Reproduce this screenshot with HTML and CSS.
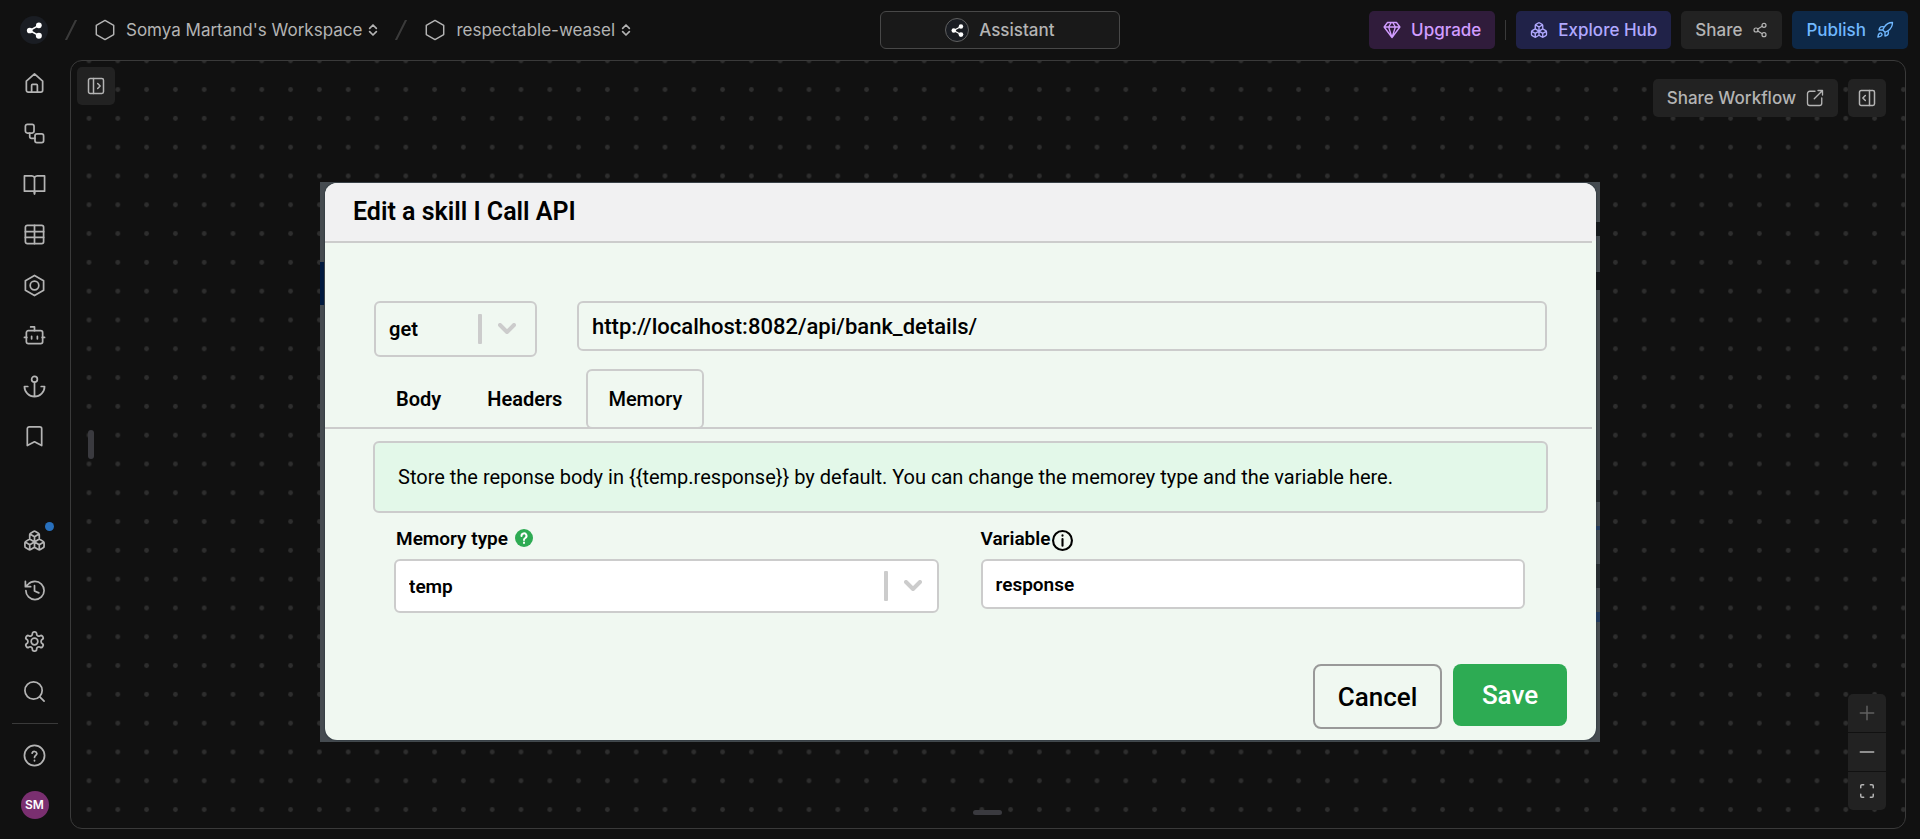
FILE: index.html
```html
<!DOCTYPE html>
<html lang="en">
<head>
  <meta charset="UTF-8">
  <meta name="viewport" content="width=device-width, initial-scale=1.0">
  <title>respectable-weasel</title>
  <link rel="stylesheet" href="styles.css">
</head>
<body>
  <svg class="defs" aria-hidden="true">
    <symbol id="i-hexagon" viewBox="0 0 24 24"><path d="M12 1.500 21.500 7v10L12 22.500 2.500 17V7z"/></symbol>
    <symbol id="i-updown" viewBox="0 0 12 14"><path d="m2 5 4-4 4 4M2 9l4 4 4-4"/></symbol>
    <symbol id="i-share" viewBox="0 0 24 24"><circle cx="18" cy="5" r="3"/><circle cx="6" cy="12" r="3"/><circle cx="18" cy="19" r="3"/><path d="m8.600 13.500 6.800 4M15.400 6.500l-6.800 4"/></symbol>
    <symbol id="i-logo" viewBox="0 0 24 24"><path d="M17.500 5.500 6 12l11.500 6.500"/><circle class="dot" cx="17.500" cy="5.500" r="3.600"/><circle class="dot" cx="6" cy="12" r="3.600"/><circle class="dot" cx="17.500" cy="18.500" r="3.800"/></symbol>
    <symbol id="i-boxes" viewBox="0 0 24 24"><path d="M2.970 12.920A2 2 0 0 0 2 14.630v3.240a2 2 0 0 0 .970 1.710l3 1.800a2 2 0 0 0 2.060 0L12 19v-5.500l-5-3-4.030 2.420ZM7 16.500l-4.740-2.850M7 16.500l5-3M7 16.500v5.170M12 13.500V19l3.970 2.380a2 2 0 0 0 2.060 0l3-1.800a2 2 0 0 0 .970-1.710v-3.240a2 2 0 0 0-.970-1.710L17 10.500l-5 3ZM17 16.500l-5-3M17 16.500l4.740-2.850M17 16.500v5.170M7.970 4.420A2 2 0 0 0 7 6.130v4.370l5 3 5-3V6.130a2 2 0 0 0-.970-1.710l-3-1.800a2 2 0 0 0-2.060 0l-3 1.800ZM12 8 7.260 5.150M12 8l4.740-2.850M12 13.500V8"/></symbol>
    <symbol id="i-chevron" viewBox="0 0 18 12"><path d="m2 2 7 7 7-7"/></symbol>
  </svg>

  <header class="topbar">
    <nav class="crumbs">
      <a class="logo" href="#" aria-label="Home"><svg><use href="#i-logo"/></svg></a>
      <svg class="slash" viewBox="0 0 12 20"><path d="M11 0 1 20"/></svg>
      <button class="crumb"><svg class="hex"><use href="#i-hexagon"/></svg>Somya Martand's Workspace<svg class="updown"><use href="#i-updown"/></svg></button>
      <svg class="slash" viewBox="0 0 12 20"><path d="M11 0 1 20"/></svg>
      <button class="crumb"><svg class="hex"><use href="#i-hexagon"/></svg>respectable-weasel<svg class="updown"><use href="#i-updown"/></svg></button>
    </nav>
    <button class="assistant"><span class="badge"><svg><use href="#i-logo"/></svg></span>Assistant</button>
    <div class="actions">
      <button class="btn purple"><svg viewBox="0 0 24 24"><path d="M6 2h12l4.500 6L12 22 1.500 8ZM11 2 7.500 8 12 22l4.500-14L13 2M1.500 8h21"/></svg>Upgrade</button>
      <span class="divider"></span>
      <button class="btn iris"><svg><use href="#i-boxes"/></svg>Explore Hub</button>
      <button class="btn">Share<svg class="small"><use href="#i-share"/></svg></button>
      <button class="btn blue">Publish<svg viewBox="0 0 24 24"><path d="M4.500 16.500c-1.500 1.260-2 5-2 5s3.740-.5 5-2c.71-.84.7-2.130-.09-2.910a2.180 2.180 0 0 0-2.910-.09zM12 15l-3-3a22 22 0 0 1 2-3.950A12.880 12.880 0 0 1 22 2c0 2.720-.78 7.500-6 11a22.350 22.350 0 0 1-4 2zM9 12H4s.55-3.030 2-4c1.620-1.080 5 0 5 0M12 15v5s3.030-.55 4-2c1.080-1.620 0-5 0-5"/></svg></button>
    </div>
  </header>

  <div class="main">
    <aside class="sidebar">
      <nav class="side-group side-top">
        <a href="#" aria-label="Home"><svg viewBox="0 0 24 24"><path d="M3.500 9.500 12 2l8.500 7.500V19a2 2 0 0 1-2 2h-13a2 2 0 0 1-2-2zM9 21v-7a1 1 0 0 1 1-1h4a1 1 0 0 1 1 1v7"/></svg></a>
        <a href="#" aria-label="Workflow"><svg viewBox="0 0 24 24"><rect x="2.500" y="2.500" width="9" height="9" rx="2"/><path d="M7 11.500V15a2 2 0 0 0 2 2h3.500"/><rect x="12.500" y="12.500" width="9" height="9" rx="2"/></svg></a>
        <a href="#" aria-label="Knowledge"><svg viewBox="0 0 24 24"><path d="M1.500 3H9a3 3 0 0 1 3 2 3 3 0 0 1 3-2h7.500v16H14a2 2 0 0 0-2 3 2 2 0 0 0-2-3H1.500zM12 5v16"/></svg></a>
        <a href="#" aria-label="Tables"><svg viewBox="0 0 24 24"><rect x="2.500" y="2.500" width="19" height="19" rx="2"/><path d="M2.500 9h19M2.500 15h19M12 2.500v19"/></svg></a>
        <a href="#" aria-label="Variables"><svg viewBox="0 0 24 24"><path d="M12 1.500 21.500 7v10L12 22.500 2.500 17V7z"/><circle cx="12" cy="12" r="4.500"/></svg></a>
        <a href="#" aria-label="Agents"><svg viewBox="0 0 24 24"><path d="M12 7V3H8M1.500 14H4M20 14h2.500M15 13v2.500M9 13v2.500"/><rect x="3.500" y="7" width="17" height="13.500" rx="2"/></svg></a>
        <a href="#" aria-label="Hooks"><svg viewBox="0 0 24 24"><circle cx="12" cy="4.500" r="3"/><path d="M12 22.500v-15M5 12H1.500a10.500 10.500 0 0 0 21 0H19"/></svg></a>
        <a href="#" aria-label="Saved"><svg viewBox="0 0 24 24"><path d="m19.500 21.500-7.500-4-7.500 4V4a2 2 0 0 1 2-2h11a2 2 0 0 1 2 2z"/></svg></a>
      </nav>
      <div class="side-bottom">
        <nav class="side-group side-tools">
          <a href="#" class="has-dot" aria-label="Hub"><svg><use href="#i-boxes"/></svg></a>
          <a href="#" aria-label="History"><svg viewBox="0 0 24 24"><path d="M3 12a9.500 9.500 0 1 0 9.500-9.500 10 10 0 0 0-7.200 3L2.500 8M2.500 2.500V8H8M12 7v5.500l4.500 2"/></svg></a>
          <a href="#" aria-label="Settings"><svg viewBox="0 0 24 24"><path d="M12.220 2h-.44a2 2 0 0 0-2 2v.18a2 2 0 0 1-1 1.730l-.43.25a2 2 0 0 1-2 0l-.15-.08a2 2 0 0 0-2.730.73l-.22.38a2 2 0 0 0 .73 2.730l.15.1a2 2 0 0 1 1 1.720v.51a2 2 0 0 1-1 1.740l-.15.09a2 2 0 0 0-.73 2.730l.22.38a2 2 0 0 0 2.730.73l.15-.08a2 2 0 0 1 2 0l.43.25a2 2 0 0 1 1 1.730V20a2 2 0 0 0 2 2h.44a2 2 0 0 0 2-2v-.18a2 2 0 0 1 1-1.730l.43-.25a2 2 0 0 1 2 0l.15.08a2 2 0 0 0 2.730-.73l.22-.39a2 2 0 0 0-.73-2.730l-.15-.08a2 2 0 0 1-1-1.740v-.5a2 2 0 0 1 1-1.740l.15-.09a2 2 0 0 0 .73-2.730l-.22-.38a2 2 0 0 0-2.730-.73l-.15.08a2 2 0 0 1-2 0l-.43-.25a2 2 0 0 1-1-1.730V4a2 2 0 0 0-2-2z"/><circle cx="12" cy="12" r="3.500"/></svg></a>
          <a href="#" aria-label="Search"><svg viewBox="0 0 24 24"><circle cx="11" cy="11" r="9"/><path d="m22 22-4.500-4.500"/></svg></a>
        </nav>
        <hr>
        <nav class="side-group side-user">
          <a href="#" aria-label="Help"><svg viewBox="0 0 24 24"><circle cx="12" cy="12" r="10.500"/><path d="M9.500 9.500a2.600 2.600 0 0 1 5 .5c0 1.800-2.500 2-2.500 4M12 17v.500"/></svg></a>
          <a href="#" class="avatar">SM</a>
        </nav>
      </div>
    </aside>

    <main class="canvas">
      <svg class="dots" width="100%" height="100%" aria-hidden="true">
        <defs>
          <pattern id="grid" width="24" height="24" patternUnits="userSpaceOnUse" patternTransform="translate(3.600 14.200) scale(1.200)"><circle cx="12" cy="12" r="2"/></pattern>
        </defs>
        <rect width="100%" height="100%" fill="url(#grid)"/>
      </svg>

      <button class="icon-btn panel-toggle" aria-label="Open panel"><svg viewBox="0 0 24 24"><rect x="3" y="3" width="18" height="18" rx="2"/><path d="M9 3v18m5-12 3 3-3 3"/></svg></button>
      <div class="canvas-tools">
        <button class="btn">Share Workflow<svg viewBox="0 0 24 24"><path d="M12 3H5a3 3 0 0 0-3 3v13a3 3 0 0 0 3 3h13a3 3 0 0 0 3-3v-7M16 2h6v6M22 2 11 13"/></svg></button>
        <button class="icon-btn" aria-label="Open details"><svg viewBox="0 0 24 24"><rect x="3" y="3" width="18" height="18" rx="2"/><path d="M15 3v18m-5-12-3 3 3 3"/></svg></button>
      </div>
      <span class="handle handle-left"></span>
      <span class="handle handle-bottom"></span>
      <div class="zoom">
        <button class="icon-btn" aria-label="Zoom in" disabled><svg viewBox="0 0 24 24"><path d="M12 4v16M4 12h16"/></svg></button>
        <button class="icon-btn" aria-label="Zoom out"><svg viewBox="0 0 24 24"><path d="M4 12h16"/></svg></button>
        <button class="icon-btn" aria-label="Fit view"><svg viewBox="0 0 24 24"><path d="M8 4.500H6A1.500 1.500 0 0 0 4.500 6v2M16 4.500h2A1.500 1.500 0 0 1 19.500 6v2M4.500 16v2A1.500 1.500 0 0 0 6 19.500h2M19.500 16v2a1.500 1.500 0 0 1-1.500 1.500h-2"/></svg></button>
      </div>

      <div class="frame">
        <form class="dialog">
          <h1>Edit a skill I Call API</h1>
          <hr>
          <div class="request">
            <div class="select method">
              <select aria-label="Method"><option>get</option><option>post</option></select>
              <span class="arrow"><svg><use href="#i-chevron"/></svg></span>
            </div>
            <input type="text" class="url" aria-label="URL" value="http://localhost:8082/api/bank_details/">
          </div>
          <div class="tabs">
            <button type="button">Body</button>
            <button type="button">Headers</button>
            <button type="button" class="active">Memory</button>
          </div>
          <hr>
          <p class="note">Store the reponse body in {{temp.response}} by default. You can change the memorey type and the variable here.</p>
          <div class="fields">
            <div class="field">
              <div class="label"><label for="memory">Memory type</label><svg class="help" viewBox="0 0 18 18"><circle cx="9" cy="9" r="9"/><path d="M6.500 7a2.500 2.500 0 1 1 3.800 2c-1 .6-1.300 1-1.300 2M9 13.500v.5"/></svg></div>
              <div class="select memory">
                <select id="memory"><option>temp</option><option>session</option></select>
                <span class="arrow"><svg><use href="#i-chevron"/></svg></span>
              </div>
            </div>
            <div class="field">
              <div class="label variable"><label for="variable">Variable</label><svg class="info" viewBox="0 0 20 20"><circle cx="10" cy="10" r="9"/><path d="M10 8.500V15M10 5v.500"/></svg></div>
              <input type="text" id="variable" value="response">
            </div>
          </div>
          <div class="buttons">
            <button type="button" class="cancel">Cancel</button>
            <button type="submit" class="save">Save</button>
          </div>
        </form>
      </div>
    </main>
  </div>
</body>
</html>
```
FILE: styles.css
```css
* {
  box-sizing: border-box;
}
body {
  margin: 0;
  min-height: 100vh;
  display: flex;
  flex-direction: column;
  background: #111;
  color: #b4b4b4;
  font-family: Inter, sans-serif;
  font-size: 17px;
}
button, input, select {
  font: inherit;
  color: inherit;
  margin: 0;
}
button {
  cursor: pointer;
  background: none;
  border: none;
  padding: 0;
}
a {
  color: inherit;
  text-decoration: none;
}
svg {
  display: block;
  flex: none;
  fill: none;
  stroke: currentColor;
  stroke-width: 2;
  stroke-linecap: round;
  stroke-linejoin: round;
}
.dot {
  fill: currentColor;
  stroke: none;
}
.defs {
  position: absolute;
  width: 0;
  height: 0;
}

/* top bar */
.topbar {
  display: grid;
  grid-template-columns: 12fr 240px 11fr;
  align-items: center;
  height: 60px;
  padding: 0 12px 0 20px;
}
.crumbs, .actions {
  display: flex;
  align-items: center;
}
.logo, .badge {
  display: grid;
  place-items: center;
  width: 28px;
  height: 28px;
  border-radius: 50%;
  background: #1a1d23;
  color: #fff;
}
.logo svg {
  width: 19px;
  height: 19px;
}
.slash {
  width: 12px;
  height: 20px;
  margin: 0 17px;
  stroke: #3a3a3a;
}
.crumb {
  display: flex;
  align-items: center;
  white-space: nowrap;
}
.hex {
  width: 22px;
  height: 22px;
  margin-right: 10px;
  stroke-width: 1.6;
}
.updown {
  width: 10px;
  height: 12px;
  margin-left: 6px;
}
.assistant {
  display: flex;
  align-items: center;
  justify-content: center;
  gap: 10px;
  height: 38px;
  border: 1px solid #484848;
  border-radius: 6px;
  background: #191919;
  font-weight: 500;
}
.badge {
  width: 24px;
  height: 24px;
  border: 1px solid #606060;
}
.badge svg {
  width: 15px;
  height: 15px;
}
.actions {
  justify-content: flex-end;
  gap: 10px;
}
.btn {
  display: flex;
  align-items: center;
  gap: 10px;
  height: 38px;
  padding: 0 14px;
  border-radius: 5px;
  background: #222;
  font-weight: 500;
  white-space: nowrap;
}
.btn svg {
  width: 18px;
  height: 18px;
  stroke-width: 1.8;
}
.btn .small {
  width: 16px;
  height: 16px;
}
.purple {
  background: #301c3b;
  color: #d19dff;
}
.iris {
  background: #202248;
  color: #b1a9ff;
}
.blue {
  background: #0d2847;
  color: #70b8ff;
}
.divider {
  width: 1px;
  height: 20px;
  background: #3a3a3a;
}

/* sidebar */
.main {
  flex: 1;
  display: flex;
  padding: 0 14px 10px 0;
}
.sidebar {
  width: 70px;
  margin: -2px 0 -1px;
  padding-right: 1px;
  display: flex;
  flex-direction: column;
  justify-content: space-between;
}
.side-group {
  display: grid;
  grid-auto-rows: 1fr;
  place-items: center;
}
.side-group svg {
  width: 23px;
  height: 23px;
  stroke-width: 1.8;
}
.side-top {
  height: 404px;
}
.side-tools {
  height: 202px;
}
.side-user {
  height: 100px;
}
.has-dot {
  position: relative;
}
.has-dot::after {
  content: "";
  position: absolute;
  top: -7px;
  right: -8px;
  width: 9px;
  height: 9px;
  border-radius: 50%;
  background: #2870bd;
}
.sidebar hr {
  margin: 6px 11px 6px 12px;
  border: 0;
  border-top: 1px solid #3a3a3a;
}
.avatar {
  width: 28px;
  line-height: 28px;
  border-radius: 50%;
  background: #7a2f70;
  color: #fff;
  font-size: 12px;
  font-weight: 600;
  text-align: center;
}

/* canvas */
.canvas {
  flex: 1;
  position: relative;
  overflow: hidden;
  border: 1px solid #3a3a3a;
  border-radius: 12px;
}
.dots {
  position: absolute;
  inset: 0;
}
.dots circle {
  fill: #2e2e2e;
  stroke: none;
}
.dots rect {
  stroke: none;
}
.icon-btn {
  display: grid;
  place-items: center;
  width: 38px;
  height: 38px;
  border-radius: 5px;
  background: #222;
}
.icon-btn svg {
  width: 20px;
  height: 20px;
  stroke-width: 1.8;
}
.panel-toggle {
  position: absolute;
  top: 6px;
  left: 6px;
}
.canvas-tools {
  position: absolute;
  top: 18px;
  right: 19px;
  display: flex;
  gap: 10px;
}
.zoom {
  position: absolute;
  right: 19px;
  bottom: 18px;
  display: grid;
  gap: 1px;
  border-radius: 5px;
  overflow: hidden;
}
.zoom .icon-btn {
  border-radius: 0;
}
.icon-btn:disabled {
  color: #606060;
}
.handle {
  position: absolute;
  border-radius: 3px;
  background: #3a3a3f;
}
.handle-left {
  top: 369px;
  left: 17px;
  width: 6px;
  height: 29px;
}
.handle-bottom {
  bottom: 13px;
  left: 50%;
  width: 29px;
  height: 5px;
  margin-left: -15px;
}

/* skill dialog */
.frame {
  position: relative;
  margin: 121px 305px 86px 249px;
  padding: 1px 4px 2px 5px;
  background: #454b50;
}
/* slivers of the page behind the dialog */
.frame::before, .frame::after {
  content: "";
  position: absolute;
}
.frame::before {
  top: 80px;
  left: 0;
  width: 4px;
  height: 43px;
  background: #001a3f;
}
.frame::after {
  top: 0;
  right: 0;
  bottom: 0;
  width: 4px;
  background: linear-gradient(transparent 40px, #15191c 40px, #15191c 54px, transparent 54px, transparent 90px, #15191c 90px, #15191c 108px, transparent 108px, transparent 298px, #262b2f 298px, #262b2f 320px, transparent 320px, transparent 344px, #223a5c 344px, #223a5c 348px, transparent 348px, transparent 382px, #262b2f 382px, #262b2f 406px, transparent 406px, transparent 430px, #223a5c 430px, #223a5c 440px, transparent 440px);
}
.dialog {
  position: relative;
  border-radius: 12px;
  overflow: hidden;
  background: #f0f8f1;
  box-shadow: 0 0 2px #1b2830;
  color: #000;
  font-family: Roboto, sans-serif;
  font-size: 20px;
  font-weight: 500;
}
.dialog hr {
  height: 2px;
  margin: 0 4px 0 0;
  border: 0;
  background: #ccc;
}
h1 {
  margin: 0;
  padding: 0 28px;
  background: #f1f1f2;
  font-size: 25px;
  line-height: 58px;
  font-weight: 600;
}
.request {
  display: flex;
  align-items: flex-start;
  gap: 40px;
  padding: 58px 49px 0;
}
.select {
  position: relative;
}
select, .dialog input {
  display: block;
  width: 100%;
  height: 50px;
  padding: 0 13px;
  border: 2px solid #ccc;
  border-radius: 6px;
  background: #fff;
  outline: none;
}
select {
  appearance: none;
  height: 54px;
  font-weight: 600;
}
.arrow {
  position: absolute;
  top: 12px;
  right: 17px;
  display: flex;
  align-items: center;
  gap: 16px;
  height: 30px;
  color: #ccc;
  pointer-events: none;
}
.arrow::before {
  content: "";
  width: 4px;
  height: 30px;
  border-radius: 1px;
  background: #ccc;
}
.arrow svg {
  width: 18px;
  height: 12px;
  stroke-width: 4;
}
.method {
  width: 163px;
}
.method .arrow {
  top: 13px;
  right: 21px;
}
.method select, .dialog .url {
  background: transparent;
}
.method select {
  height: 56px;
}
.dialog .url {
  flex: 1;
  font-size: 22px;
}
.tabs {
  display: flex;
  gap: 2px;
  margin-top: 12px;
  padding-left: 49px;
}
.tabs button {
  height: 60px;
  margin-bottom: -2px;
  padding: 0 20px;
  border: 2px solid transparent;
  border-radius: 6px;
  font-weight: 600;
}
.tabs .active {
  border-color: #ccc;
  font-weight: 500;
}
.note {
  margin: 12px 48px 0;
  padding: 0 23px;
  border: 2px solid #ccc;
  border-radius: 6px;
  background: #e3f8e9;
  line-height: 68px;
  font-weight: 400;
}
.fields {
  display: grid;
  grid-template-columns: 1fr 1fr;
  gap: 42px;
  padding: 12px 71px 0 69px;
  font-size: 19px;
  font-weight: 600;
}
.label {
  display: flex;
  align-items: center;
  gap: 7px;
  height: 26px;
  margin-bottom: 8px;
  padding-left: 2px;
}
.variable {
  gap: 2px;
  padding-left: 0;
}
.help {
  width: 18px;
  height: 18px;
  stroke: #fff;
  stroke-width: 2;
}
.help circle {
  fill: #2dab53;
  stroke: none;
}
.info {
  width: 21px;
  height: 21px;
  margin-top: 4px;
}
.buttons {
  display: flex;
  justify-content: flex-end;
  gap: 11px;
  padding: 51px 29px 11px;
  font-size: 26px;
}
.buttons button {
  height: 65px;
  border-radius: 8px;
}
.buttons .cancel {
  width: 129px;
  border: 2px solid #999;
}
.buttons .save {
  width: 114px;
  height: 62px;
  background: #2dab53;
  color: #fff;
}
```
